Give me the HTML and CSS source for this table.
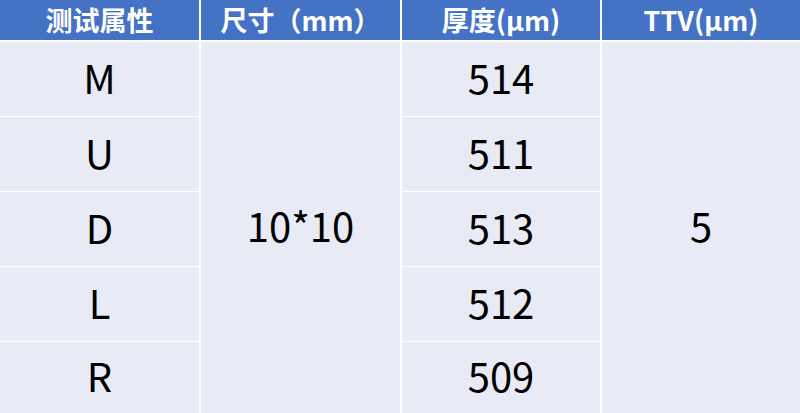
FILE: index.html
```html
<!DOCTYPE html>
<html lang="zh-CN">
<head>
<meta charset="utf-8">
<title>测试属性</title>
<link rel="stylesheet" href="styles.css">
</head>
<body>
<div class="table">
  <div class="cell head">测试属性</div>
  <div class="cell head">尺寸（mm）</div>
  <div class="cell head">厚度(µm)</div>
  <div class="cell head">TTV(µm)</div>

  <div class="cell r2 c1">M</div>
  <div class="cell span c2">10*10</div>
  <div class="cell r2 c3">514</div>
  <div class="cell span c4">5</div>

  <div class="cell r3 c1">U</div>
  <div class="cell r3 c3">511</div>

  <div class="cell r4 c1">D</div>
  <div class="cell r4 c3">513</div>

  <div class="cell r5 c1">L</div>
  <div class="cell r5 c3">512</div>

  <div class="cell r6 c1">R</div>
  <div class="cell r6 c3">509</div>
</div>
</body>
</html>
```

FILE: styles.css
```css
html, body {
  margin: 0;
  padding: 0;
  background: #ffffff;
  overflow: hidden;
}

.table {
  width: 800px;
  height: 413px;
  display: grid;
  grid-template-columns: 199px 199px 198px 198px;
  grid-template-rows: 41px 74px 74px 74px 74px 1fr;
  column-gap: 2px;
  row-gap: 1px;
  background: #ffffff;
  font-family: "Noto Sans CJK SC", "Noto Sans", sans-serif;
}

.cell {
  display: flex;
  align-items: center;
  justify-content: center;
  background: #e8ebf5;
  color: #000000;
  font-size: 40px;
  line-height: 1;
  padding-bottom: 5px;
  box-sizing: border-box;
}

.head {
  background: #4472c4;
  color: #ffffff;
  font-size: 27px;
  font-weight: 700;
  border-bottom: 1px solid #ffffff;
  padding-bottom: 2px;
}

.c1 { grid-column: 1; }
.c2 { grid-column: 2; }
.c3 { grid-column: 3; }
.c4 { grid-column: 4; }

.span { grid-row: 2 / 7; }

.r2 { grid-row: 2; }
.r3 { grid-row: 3; }
.r4 { grid-row: 4; }
.r5 { grid-row: 5; }
.r6 { grid-row: 6; }
```
